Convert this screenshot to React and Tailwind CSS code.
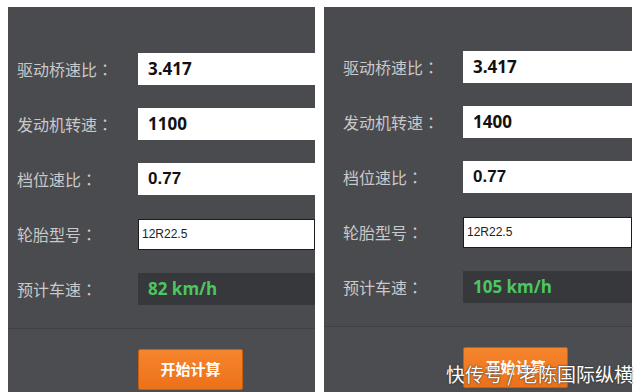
import React from "react";

const cjk = "font-['Noto_Sans_CJK_SC','Noto_Sans',sans-serif]";
const colonFont = "font-['Noto_Sans_CJK_TC','Noto_Sans',sans-serif]";
const num = "font-['Open_Sans','Noto_Sans',sans-serif]";
const arial = "font-['Liberation_Sans',Arial,sans-serif]";

function Row({ label, labelW, children }) {
  return (
    <div className="flex h-8 items-center">
      <div className={`shrink-0 text-[16px] leading-none text-[#c9c9c9] ${cjk} ${labelW}`}>
        {label}
        <span className={colonFont}>：</span>
      </div>
      {children}
    </div>
  );
}

function ValueBox({ children, font }) {
  return (
    <div className={`flex h-8 flex-1 items-center bg-white pl-[10px] text-[17px] font-bold text-[#111] ${font}`}>
      {children}
    </div>
  );
}

function Panel({ values, result, className, padL, labelW, btnPad }) {
  return (
    <div className={`flex h-[385px] flex-col bg-[#4a4b4f] ${className}`}>
      <div className={`flex flex-col gap-[23px] ${padL}`}>
        <Row label="驱动桥速比" labelW={labelW}>
          <ValueBox font={num}>{values[0]}</ValueBox>
        </Row>
        <Row label="发动机转速" labelW={labelW}>
          <ValueBox font={num}>{values[1]}</ValueBox>
        </Row>
        <Row label="档位速比" labelW={labelW}>
          <ValueBox font={arial}>{values[2]}</ValueBox>
        </Row>
        <Row label="轮胎型号" labelW={labelW}>
          <div className={`flex h-[31px] flex-1 items-center border border-[#1c1c1c] bg-white pl-[3px] text-[12px] text-[#222] ${arial}`}>
            {values[3]}
          </div>
        </Row>
        <Row label="预计车速" labelW={labelW}>
          <div className={`flex h-8 flex-1 items-center bg-[#36383b] pl-[10px] text-[17px] font-bold text-[#4cc65e] ${num}`}>
            {result}
          </div>
        </Row>
      </div>
      <div className="mt-[23px] h-px bg-[#404144]" />
      <div className={`flex flex-1 bg-[#4c4d51] pt-[20px] ${btnPad}`}>
        <div
          className={`flex h-[41px] w-[105px] items-center justify-center rounded-[2px] border border-[#c85e12] bg-gradient-to-b from-[#f5852c] to-[#ec7119] text-[15px] font-bold text-white ${cjk}`}
        >
          开始计算
        </div>
      </div>
    </div>
  );
}

export default function App() {
  return (
    <div className="relative h-[392px] w-[640px] overflow-hidden bg-white">
      <div className="flex gap-[9px] pl-[8px] pt-[7px]">
        <Panel
          className="w-[307px] pt-[46px]"
          padL="pl-[9px]"
          labelW="w-[121px]"
          btnPad="pl-[130px]"
          values={["3.417", "1100", "0.77", "12R22.5"]}
          result="82 km/h"
        />
        <Panel
          className="w-[308px] pt-[44px]"
          padL="pl-[19px]"
          labelW="w-[120px]"
          btnPad="pl-[139px]"
          values={["3.417", "1400", "0.77", "12R22.5"]}
          result="105 km/h"
        />
      </div>
      <div
        className={`absolute left-[446px] top-[364px] text-[19px] leading-none text-white [text-shadow:0_0_2px_#333,0_0_1px_#333] ${cjk}`}
      >
        快传号 / 老陈国际纵横
      </div>
    </div>
  );
}
